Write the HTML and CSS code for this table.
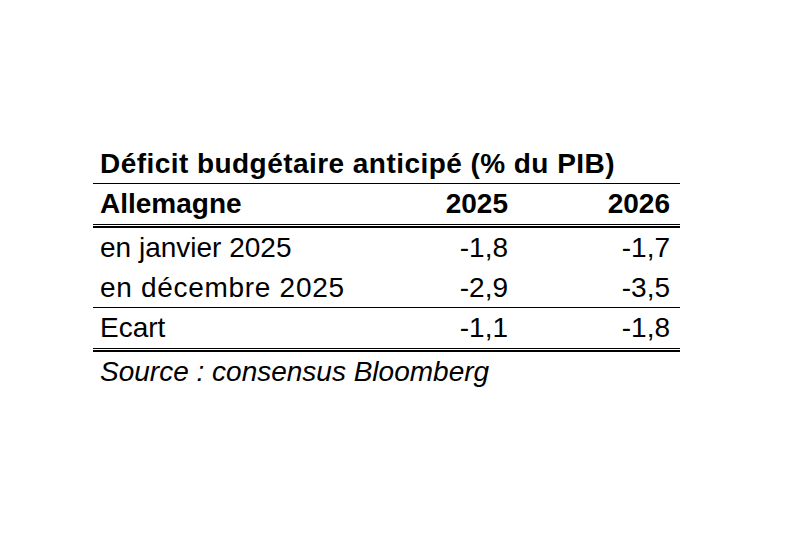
FILE: index.html
```html
<!DOCTYPE html>
<html lang="fr">
<head>
<meta charset="utf-8">
<title>Déficit budgétaire anticipé</title>
<link rel="stylesheet" href="styles.css">
</head>
<body>
<div class="page">
  <div class="sheet">
    <div class="title">Déficit budgétaire anticipé (% du PIB)</div>
    <div class="row head">
      <div class="label">Allemagne</div>
      <div class="num">2025</div>
      <div class="num">2026</div>
    </div>
    <div class="double"></div>
    <div class="row">
      <div class="label">en janvier 2025</div>
      <div class="num">-1,8</div>
      <div class="num">-1,7</div>
    </div>
    <div class="row ruled">
      <div class="label label-wide">en décembre 2025</div>
      <div class="num">-2,9</div>
      <div class="num">-3,5</div>
    </div>
    <div class="row">
      <div class="label">Ecart</div>
      <div class="num">-1,1</div>
      <div class="num">-1,8</div>
    </div>
    <div class="double"></div>
    <div class="source">Source : consensus Bloomberg</div>
  </div>
</div>
</body>
</html>
```
FILE: styles.css
```css
html, body {
  margin: 0;
  padding: 0;
  background: #ffffff;
}
.page {
  padding: 144px 0 0 93px;
}
.sheet {
  width: 587px;
  font-family: "Liberation Sans", Arial, sans-serif;
  font-size: 28px;
  color: #000;
}
.title {
  font-weight: bold;
  height: 39px;
  line-height: 39px;
  padding-left: 7px;
  letter-spacing: 0.45px;
  white-space: nowrap;
  border-bottom: 1px solid #000;
}
.row {
  display: grid;
  grid-template-columns: minmax(0, 1fr) 170px 162px;
  height: 40px;
  align-items: center;
  padding-left: 7px;
  padding-right: 10px;
}
.row.ruled {
  height: 39px;
  border-bottom: 1px solid #000;
}
.head {
  font-weight: bold;
}
.label {
  white-space: nowrap;
}
.label-wide {
  letter-spacing: 0.7px;
}
.num {
  text-align: right;
  white-space: nowrap;
}
.double {
  height: 2px;
  border-top: 1px solid #000;
  padding-top: 1px;
  background: #000;
  background-clip: content-box;
}
.source {
  font-style: italic;
  padding-left: 7px;
  height: 40px;
  line-height: 40px;
  white-space: nowrap;
}
```
